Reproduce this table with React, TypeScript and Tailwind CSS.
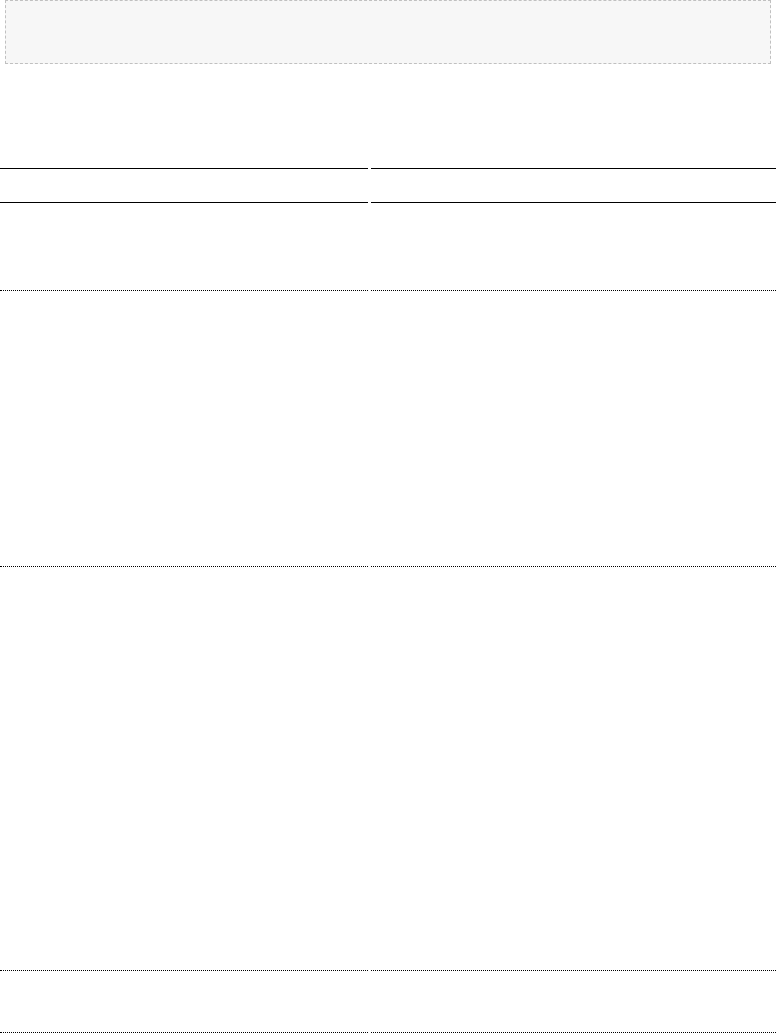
import React from "react";

const rows = [88, 276, 404, 62];

export default function App() {
  return (
    <div className="w-[776px] bg-white" style={{ fontFamily: '"Liberation Sans", Arial, sans-serif' }}>
      <div className="mx-[5px] h-[64px] border border-dashed border-[#c0c0c0] bg-[#f7f7f7]" />
      <div className="mt-[104px] grid grid-cols-[368px_405px] gap-x-[3px]">
        <div className="h-[35px] border-y border-black" />
        <div className="h-[35px] border-y border-black" />
        {rows.map((h, i) => (
          <React.Fragment key={i}>
            <div className="border-b border-dotted border-black" style={{ height: h }} />
            <div className="border-b border-dotted border-black" style={{ height: h }} />
          </React.Fragment>
        ))}
      </div>
    </div>
  );
}
